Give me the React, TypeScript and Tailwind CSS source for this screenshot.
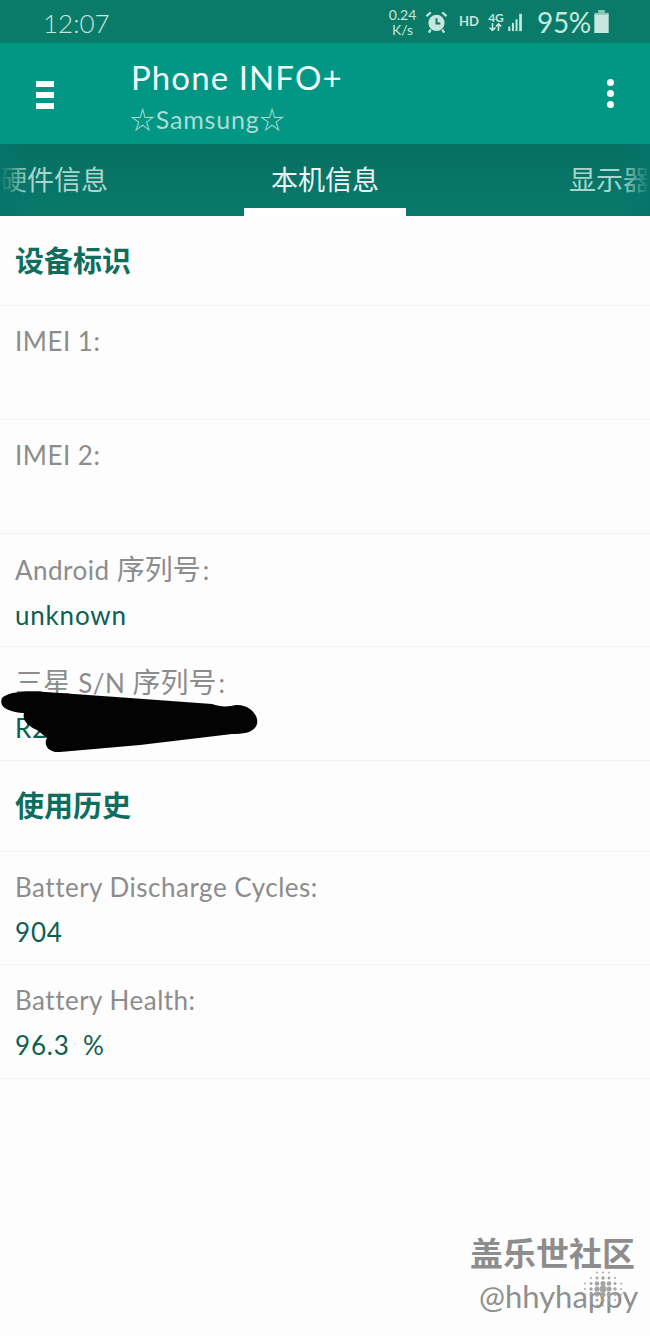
import type { ReactNode } from 'react';

const FONT = "font-['Lato','Noto_Sans_CJK_SC',sans-serif]";

function SectionTitle({ title, height }: { title: string; height: string }) {
    return (
        <div className={`flex items-center px-[15px] border-b border-[#f2f2f2] ${height}`}>
            <h2 className="text-[29px] font-bold text-[#0d6e60] leading-none -mt-[1px]">{title}</h2>
        </div>
    );
}

function InfoRow({ label, value, height = 'h-[114px]' }: { label: ReactNode; value?: string; height?: string }) {
    return (
        <div className={`${height} px-[15px] pt-[19px] border-b border-[#f2f2f2]`}>
            <div className="text-[26px] leading-[32px] text-[#8c8c8c] tracking-[0.5px] whitespace-pre">{label}</div>
            {value && <div className="text-[26px] leading-[32px] mt-[13px] text-[#0d5f54] tracking-[0.8px] [word-spacing:6px]">{value}</div>}
        </div>
    );
}

function Cjk({ children }: { children: ReactNode }) {
    return <span className="text-[28px] tracking-[0px]">{children}</span>;
}

function StatusIcons() {
    return (
        <div className="flex items-center text-[#c6e6de]">
            <div className="flex flex-col items-center text-[14px] leading-[15px] w-[29px] mt-[1px]">
                <span>0.24</span>
                <span>K/s</span>
            </div>
            <svg className="ml-[8px]" width="23" height="24" viewBox="0 0 24 24" fill="none">
                <circle cx="12" cy="13" r="8.5" fill="#c6e6de" />
                <path d="M12 8v5.5h4" stroke="#0b7a66" strokeWidth="2" />
                <path d="M1.5 6 6 2M22.5 6 18 2M6 20l-2 3M18 20l2 3" stroke="#c6e6de" strokeWidth="2.4" />
            </svg>
            <span className="ml-[11px] text-[13px] leading-none font-bold w-[19px]">HD</span>
            <div className="ml-[10px] flex flex-col items-center w-[16px]">
                <span className="text-[12px] leading-[11px] font-bold">4G</span>
                <svg width="15" height="8" viewBox="0 0 14 8" fill="none" stroke="#c6e6de" strokeWidth="1.6">
                    <path d="M4 0v7M1 4.5 4 7.5 7 4.5M10 8V1M7.5 3.5 10 .8l2.8 2.7" />
                </svg>
            </div>
            <svg className="ml-[4px] mt-[1px]" width="16" height="20" viewBox="0 0 17 22" fill="#c6e6de">
                <rect x="0" y="16" width="2.2" height="5" />
                <rect x="4" y="12" width="2.2" height="9" />
                <rect x="8" y="8" width="2.2" height="13" />
                <rect x="12" y="2" width="3" height="19" />
            </svg>
            <span className="ml-[13px] text-[28px] leading-none tracking-[-0.3px]">95%</span>
            <svg className="ml-[3px]" width="15" height="23" viewBox="0 0 15 24" fill="#c6e6de">
                <rect x="4" y="0" width="7" height="3" fill="#8fc4b8" />
                <rect x="0" y="3" width="15" height="3" fill="#8fc4b8" />
                <rect x="0" y="5" width="15" height="19" />
            </svg>
        </div>
    );
}

function Scribble() {
    return (
        <svg className="absolute left-0 top-[688px]" width="262" height="68" viewBox="0 0 262 68" fill="#030303">
            <path d="M2 10 C8 3 30 2 60 5 L130 10 L212 16 C220 19 228 19 236 17 C250 16 259 28 257 36 C254 45 244 46 232 46 L140 57 L60 64 C48 65 43 56 47 50 L37 42 C28 38 22 32 24 25 C10 24 -2 20 2 10 Z" />
        </svg>
    );
}

function Halftone() {
    const dots: { x: number; y: number; r: number }[] = [];
    for (let row = -3; row <= 3; row++) {
        for (let col = -3; col <= 3; col++) {
            const d = Math.hypot(row, col);
            if (d > 3.3) continue;
            dots.push({ x: 21 + col * 6, y: 18 + row * 5.5, r: Math.max(0.9, 3.4 - d * 0.85) });
        }
    }
    return (
        <svg className="absolute left-[112px] top-[36px]" width="42" height="36" viewBox="0 0 42 36" fill="#a4a4a4">
            {dots.map(d => (
                <circle key={`${d.x}-${d.y}`} cx={d.x} cy={d.y} r={d.r} />
            ))}
        </svg>
    );
}

export default function App() {
    const tabs = [
        { label: '硬件信息', cls: 'left-0 text-[#a9d6cc]' },
        { label: '本机信息', cls: 'left-[271px] text-[#eef8f6]' },
        { label: '显示器', cls: 'left-[569px] text-[#a9d6cc]' },
    ];

    return (
        <div className={`relative w-[650px] h-[1336px] overflow-hidden bg-[#fdfdfd] ${FONT}`}>
            {/* status bar */}
            <div className="h-[43px] bg-[#0a7b68] flex items-center justify-between pl-[43px] pr-[41px]">
                <span className="text-[26px] leading-none font-light text-[#c6e6de] mt-[2px]">12:07</span>
                <StatusIcons />
            </div>

            {/* toolbar */}
            <div className="h-[101px] bg-[#029685] flex items-center">
                <div className="w-[131px] pl-[36px] mt-[2px]">
                    <div className="w-[18px] flex flex-col gap-[5px]">
                        <span className="h-[6px] bg-white" />
                        <span className="h-[6px] bg-white" />
                        <span className="h-[6px] bg-white" />
                    </div>
                </div>
                <div className="flex-1 mt-[3px]">
                    <div className="text-[33px] leading-[40px] text-[#f2fbf9] tracking-[1.1px]">Phone INFO+</div>
                    <div className="text-[25px] leading-[30px] mt-[7px] text-[#a9dcd2] tracking-[0.8px] -ml-[1px]">☆Samsung☆</div>
                </div>
                <div className="w-[80px] flex flex-col items-center gap-[4px] -mt-[1px]">
                    <span className="size-[7px] rounded-full bg-white" />
                    <span className="size-[7px] rounded-full bg-white" />
                    <span className="size-[7px] rounded-full bg-white" />
                </div>
            </div>

            {/* tabs */}
            <div className="relative h-[72px] bg-gradient-to-b from-[#066f62] to-[#087a6c] overflow-hidden">
                {tabs.map(t => (
                    <span key={t.label} className={`absolute top-[19px] text-[27px] leading-[34px] whitespace-nowrap ${t.cls}`}>
                        {t.label}
                    </span>
                ))}
                <div className="absolute inset-y-0 left-0 w-[30px] bg-gradient-to-r from-[#07746a] to-transparent" />
                <div className="absolute inset-y-0 right-0 w-[30px] bg-gradient-to-l from-[#07746a] to-transparent" />
                <div className="absolute left-[244px] bottom-0 w-[162px] h-[8px] bg-white" />
            </div>

            <SectionTitle title="设备标识" height="h-[90px]" />
            <InfoRow label="IMEI 1:" />
            <InfoRow label="IMEI 2:" />
            <InfoRow label={<>Android <Cjk>序列号</Cjk><span className="ml-[2px]">:</span></>} value="unknown" height="h-[113px]" />
            <InfoRow label={<><Cjk>三星</Cjk> S/N <Cjk>序列号</Cjk><span className="ml-[2px]">:</span></>} value="R2" />
            <SectionTitle title="使用历史" height="h-[91px]" />
            <InfoRow label="Battery Discharge Cycles:" value="904" height="h-[113px]" />
            <InfoRow label="Battery Health:" value="96.3 %" />

            <Scribble />

            {/* watermark */}
            <div className="absolute left-[470px] top-[1235px] w-[170px]">
                <div className="text-[33px] leading-[36px] font-bold text-[#8d8d8d] whitespace-nowrap">盖乐世社区</div>
                <div className="text-[31px] leading-[34px] mt-[8px] ml-[9px] text-[#8f8f8f] whitespace-nowrap">@hhyhappy</div>
                <Halftone />
            </div>
        </div>
    );
}
